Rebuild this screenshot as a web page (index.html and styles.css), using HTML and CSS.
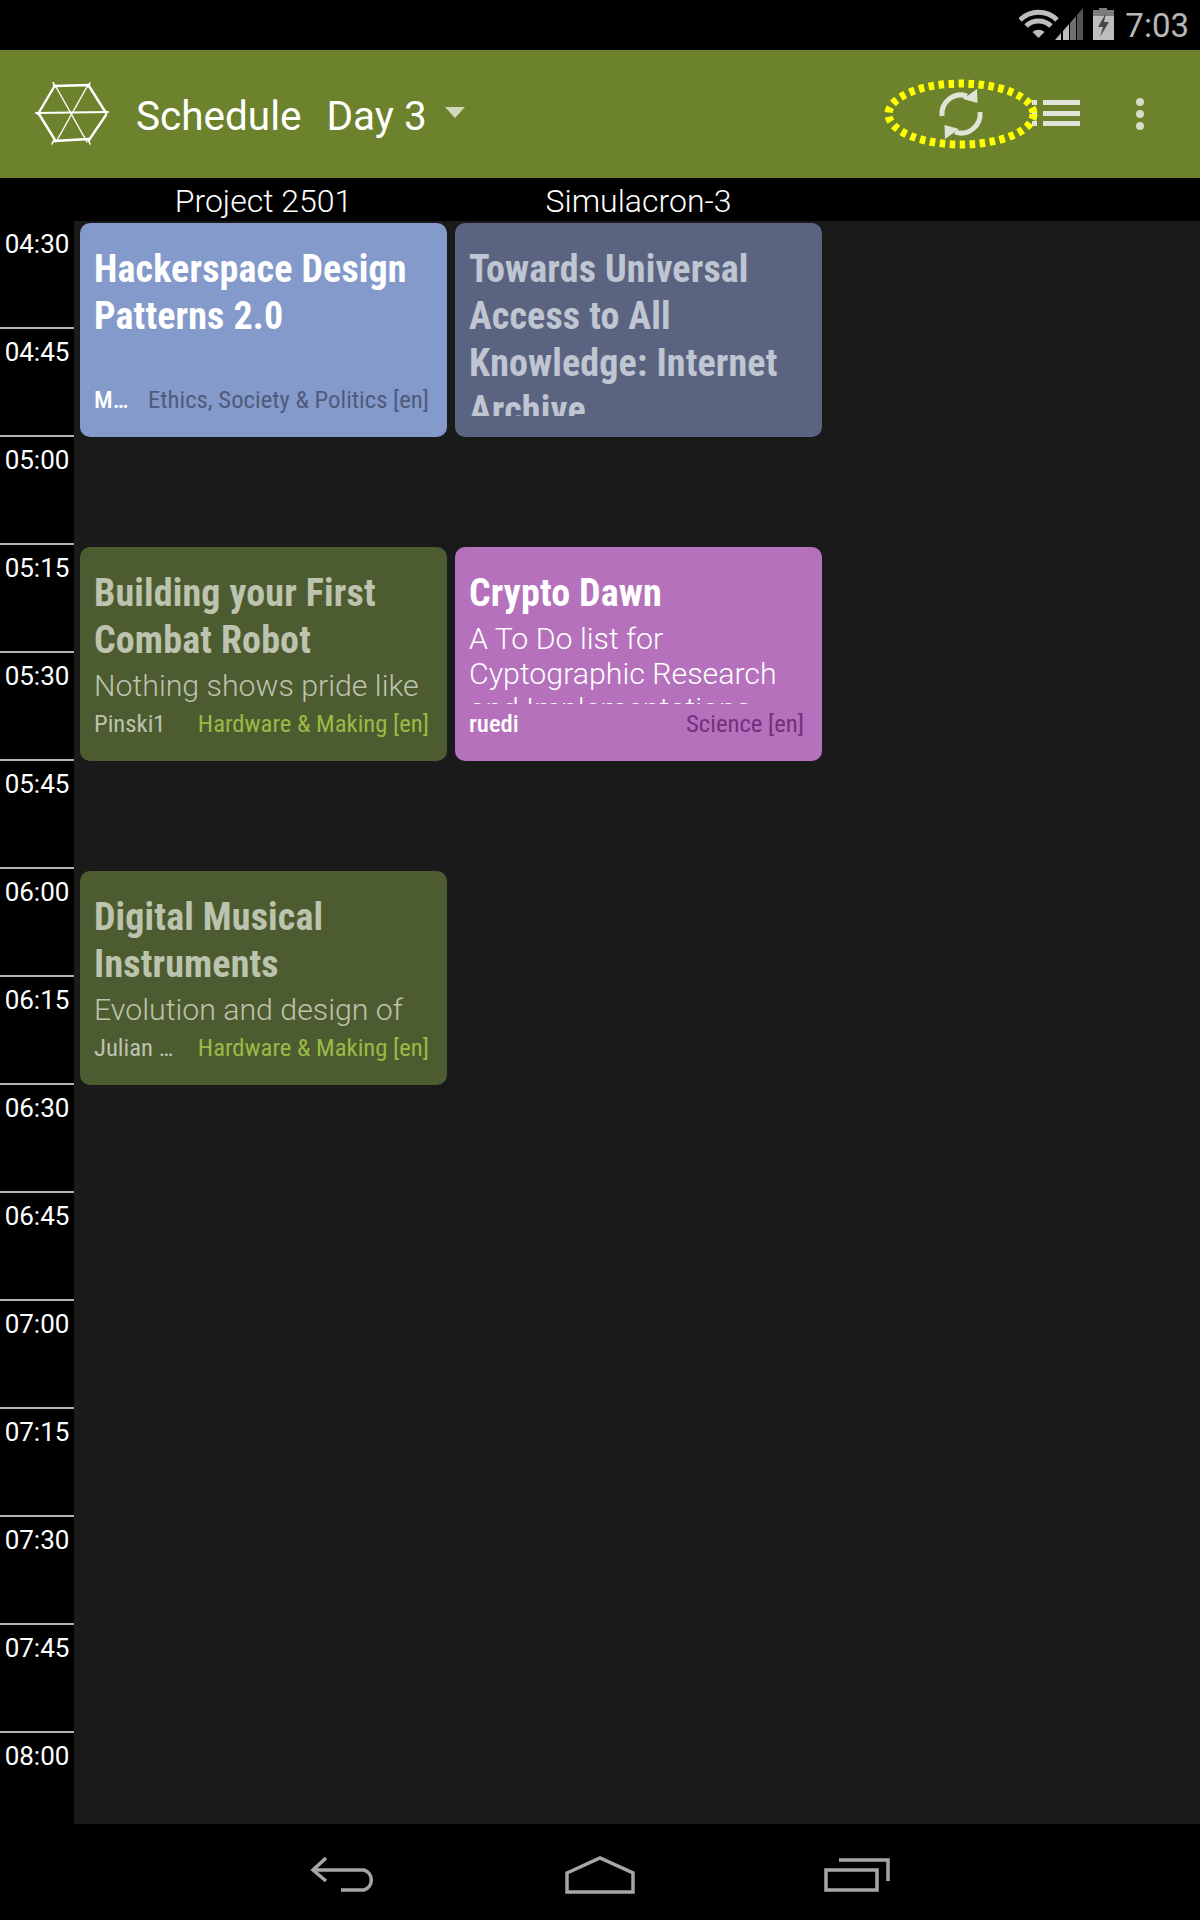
FILE: index.html
```html
<!DOCTYPE html>
<html lang="en">
<head>
  <meta charset="UTF-8">
  <title>Schedule</title>
  <link rel="stylesheet" href="styles.css">
</head>
<body>
  <div class="statusbar">
    <svg class="status-icons" width="98" height="36" viewBox="0 0 98 36">
      <!-- wifi -->
      <path d="M1 13 A26 26 0 0 1 38 13" fill="none" stroke="#bdbdbd" stroke-width="5"/>
      <path d="M7 19 A18 18 0 0 1 32 19" fill="none" stroke="#bdbdbd" stroke-width="5"/>
      <path d="M13.500 25 L19.500 31 L25.500 25 A9 9 0 0 0 13.500 25 Z" fill="#bdbdbd"/>
      <!-- signal -->
      <polygon points="36,33 42,33 42,26" fill="#bdbdbd"/>
      <polygon points="44,33 50,33 50,17 44,24" fill="#bdbdbd"/>
      <polygon points="51,33 57,33 57,9 51,16" fill="#707070"/>
      <polygon points="58,33 64,33 64,1 58,8" fill="#555"/>
      <!-- battery -->
      <path d="M80 1 H88 V3 H95 V33 H74 V3 H80 Z" fill="#bdbdbd"/>
      <path d="M80 1 H88 V3 H95 V9 H74 V3 H80 Z" fill="#7c7c7c"/>
      <polygon points="87,6 79,20 84,20 81,30 90,15 85,15" fill="#484848"/>
    </svg>
    <span class="clock">7:03</span>
  </div>

  <header class="actionbar">
    <svg class="logo" width="76" height="64" viewBox="0 0 76 64">
      <g fill="none" stroke="#fff" stroke-linecap="round">
        <path d="M1 31 L73 30" stroke-width="2"/>
        <path d="M20 3 L52 60" stroke-width="1.4"/>
        <path d="M53 3 L21 60" stroke-width="1.4"/>
        <path d="M19 4 L54 3 M3 32 L19 5 M54 4 L71 31 M71 33 L54 58 M19 59 L54 57 M4 32 L20 58" stroke-width="2.4"/>
        <path d="M18 0 L20 5 M55 1 L53 5 M19 58 L17 62 M53 57 L55 62" stroke-width="1.6"/>
      </g>
    </svg>
    <span class="screen-title">Schedule</span>
    <span class="day-select">Day 3<i class="caret"></i></span>
    <div class="actions">
      <div class="sync-btn">
        <svg width="46" height="52" viewBox="-23 -26 46 52">
          <g fill="none" stroke="#e0e4d6" stroke-width="5">
            <path d="M-19 2 A19 19 0 0 1 6 -18"/>
            <path d="M19 -2 A19 19 0 0 1 -6 18"/>
          </g>
          <polygon points="16,-25 16.5,-11 2,-15" fill="#e0e4d6"/>
          <polygon points="-16,25 -16.5,11 -2,15" fill="#e0e4d6"/>
        </svg>
        <svg class="highlight" width="166" height="80" viewBox="0 0 166 80">
          <ellipse cx="83" cy="40" rx="72.500" ry="30.500" fill="none" stroke="#ffff00" stroke-width="8" stroke-dasharray="5.500 4.500"/>
        </svg>
      </div>
      <svg class="list-btn" width="48" height="28" viewBox="0 0 48 28">
        <path d="M0 0 H5 V5 H0 Z M11 0 H48 V5 H11 Z M0 11 H5 V16 H0 Z M11 11 H48 V16 H11 Z M0 21 H5 V26 H0 Z M11 21 H48 V26 H11 Z" fill="#e0e4d6"/>
      </svg>
      <svg class="more-btn" width="8" height="32" viewBox="0 0 8 32">
        <circle cx="4" cy="4" r="4" fill="#d6dcc8"/>
        <circle cx="4" cy="16" r="4" fill="#d6dcc8"/>
        <circle cx="4" cy="28" r="4" fill="#d6dcc8"/>
      </svg>
    </div>
  </header>

  <div class="rooms">
    <div class="room">Project 2501</div>
    <div class="room">Simulacron-3</div>
  </div>

  <main class="timetable">
    <div class="times">
      <div class="time">04:30</div>
      <div class="time">04:45</div>
      <div class="time">05:00</div>
      <div class="time">05:15</div>
      <div class="time">05:30</div>
      <div class="time">05:45</div>
      <div class="time">06:00</div>
      <div class="time">06:15</div>
      <div class="time">06:30</div>
      <div class="time">06:45</div>
      <div class="time">07:00</div>
      <div class="time">07:15</div>
      <div class="time">07:30</div>
      <div class="time">07:45</div>
      <div class="time">08:00</div>
    </div>
    <div class="slots">
      <article class="card ethics slot-a col-1">
        <div class="card-body">
          <h2>Hackerspace Design Patterns 2.0</h2>
        </div>
        <div class="card-foot">
          <span class="speaker">M…</span>
          <span class="track">Ethics, Society &amp; Politics [en]</span>
        </div>
      </article>
      <article class="card ethics-past slot-a col-2">
        <div class="card-body">
          <h2>Towards Universal Access to All Knowledge: Internet Archive</h2>
        </div>
      </article>
      <article class="card hardware slot-b col-1">
        <div class="card-body">
          <h2>Building your First Combat Robot</h2>
          <p>Nothing shows pride like</p>
        </div>
        <div class="card-foot">
          <span class="speaker">Pinski1</span>
          <span class="track">Hardware &amp; Making [en]</span>
        </div>
      </article>
      <article class="card science slot-b col-2">
        <div class="card-body">
          <h2>Crypto Dawn</h2>
          <p>A To Do list for Cyptographic Research and Implementations</p>
        </div>
        <div class="card-foot">
          <span class="speaker">ruedi</span>
          <span class="track">Science [en]</span>
        </div>
      </article>
      <article class="card hardware slot-c col-1">
        <div class="card-body">
          <h2>Digital Musical Instruments</h2>
          <p>Evolution and design of</p>
        </div>
        <div class="card-foot">
          <span class="speaker">Julian …</span>
          <span class="track">Hardware &amp; Making [en]</span>
        </div>
      </article>
    </div>
  </main>

  <nav class="navbar">
    <svg width="66" height="36" viewBox="0 0 66 36" fill="none" stroke="#a6a6a6" stroke-width="3.500">
      <path d="M16 1 L3 13 L16 24"/>
      <path d="M3 13 H54 A10.500 10.500 0 0 1 54 33 H31"/>
    </svg>
    <svg width="70" height="38" viewBox="0 0 70 38" fill="none" stroke="#a6a6a6" stroke-width="3.500">
      <path d="M2 17 L35 2 L68 17 V36 H2 Z"/>
    </svg>
    <svg width="66" height="36" viewBox="0 0 66 36" fill="none" stroke="#a6a6a6" stroke-width="3.500">
      <path d="M15 3 H64 V24"/>
      <path d="M2 13 H53 V33 H2 Z"/>
    </svg>
  </nav>
</body>
</html>
```

FILE: styles.css
```css
* {
  box-sizing: border-box;
}
html, body {
  margin: 0;
  padding: 0;
}
body {
  width: 1200px;
  height: 1920px;
  overflow: hidden;
  background: #000;
  color: #fff;
  font-family: Roboto, sans-serif;
  display: flex;
  flex-direction: column;
}

.statusbar {
  height: 50px;
  display: flex;
  align-items: center;
  justify-content: flex-end;
  padding-right: 11px;
}
.status-icons {
  margin-right: 8px;
}
.clock {
  font-size: 33px;
  color: #b8b8b8;
}

.actionbar {
  height: 128px;
  background: #6d822d;
  display: flex;
  align-items: center;
}
.logo {
  margin-left: 35px;
  margin-right: 25px;
}
.screen-title {
  font-size: 40.500px;
  margin-right: 25px;
  padding-top: 3px;
}
.day-select {
  font-size: 40.500px;
  display: flex;
  align-items: center;
  padding-top: 3px;
}
.caret {
  width: 0;
  height: 0;
  margin-left: 18px;
  margin-top: -6px;
  border-left: 10px solid transparent;
  border-right: 10px solid transparent;
  border-top: 11px solid #d0d8bc;
}
.actions {
  margin-left: auto;
  display: flex;
  align-items: center;
}
.sync-btn {
  position: relative;
  display: flex;
  margin-right: 48px;
}
.highlight {
  position: absolute;
  left: -60px;
  top: -14px;
}
.list-btn {
  margin-right: 56px;
}
.more-btn {
  margin-right: 56px;
}

.rooms {
  height: 43px;
  display: grid;
  grid-template-columns: 375px 375px;
  padding-left: 76px;
}
.room {
  font-size: 32px;
  font-weight: 300;
  line-height: 46px;
  text-align: center;
}

.timetable {
  height: 1603px;
  display: flex;
  overflow: hidden;
}
.times {
  width: 74px;
  flex: none;
}
.time {
  height: 108px;
  border-bottom: 2px solid #b4b4b4;
  font-size: 26px;
  line-height: 30px;
  padding-top: 8px;
  text-align: center;
}
.slots {
  flex: 1;
  background: #1a1a1a;
  padding-left: 6px;
  display: grid;
  grid-template-columns: 375px 375px 1fr;
  grid-auto-rows: 108px;
  align-content: start;
}

.card {
  height: 214px;
  margin: 2px 8px 0 0;
  padding: 23px 18px 21px 14px;
  border-radius: 10px;
  display: flex;
  flex-direction: column;
  overflow: hidden;
}
.slot-a {
  grid-row: 1 / span 2;
}
.slot-b {
  grid-row: 4 / span 2;
}
.slot-c {
  grid-row: 7 / span 2;
}
.col-1 {
  grid-column: 1;
}
.col-2 {
  grid-column: 2;
}
.card-body {
  flex: 1;
  min-height: 0;
  overflow: hidden;
}
.card h2 {
  margin: 0;
  font-family: "Roboto Condensed", "Liberation Sans Narrow", Roboto, sans-serif;
  font-stretch: condensed;
  font-size: 38px;
  line-height: 47px;
  font-weight: 700;
  letter-spacing: 0.150px;
}
.card p {
  margin: 4px 0 0;
  font-size: 30.300px;
  line-height: 35px;
  font-weight: 300;
}
.card-foot {
  height: 36px;
  padding-bottom: 1px;
  flex: none;
  display: flex;
  justify-content: space-between;
  align-items: flex-end;
  font-family: "Roboto Condensed", "Liberation Sans Narrow", Roboto, sans-serif;
  font-stretch: condensed;
  font-size: 24.700px;
  line-height: 30px;
}

.ethics {
  background: #839aca;
}
.ethics .speaker {
  font-weight: 500;
}
.ethics .track {
  color: #4f5b7c;
}
.ethics-past {
  background: #5a6480;
  color: #c0c5d2;
}
.hardware {
  background: #4d5c30;
  color: #bcc3ae;
}
.hardware .track {
  color: #9aba45;
}
.science {
  background: #b571bb;
}
.science .speaker {
  font-weight: 500;
}
.science .track {
  color: #74307c;
}

.navbar {
  flex: 1;
  display: flex;
  align-items: center;
  justify-content: center;
  gap: 189px;
  padding-top: 6px;
}
```
